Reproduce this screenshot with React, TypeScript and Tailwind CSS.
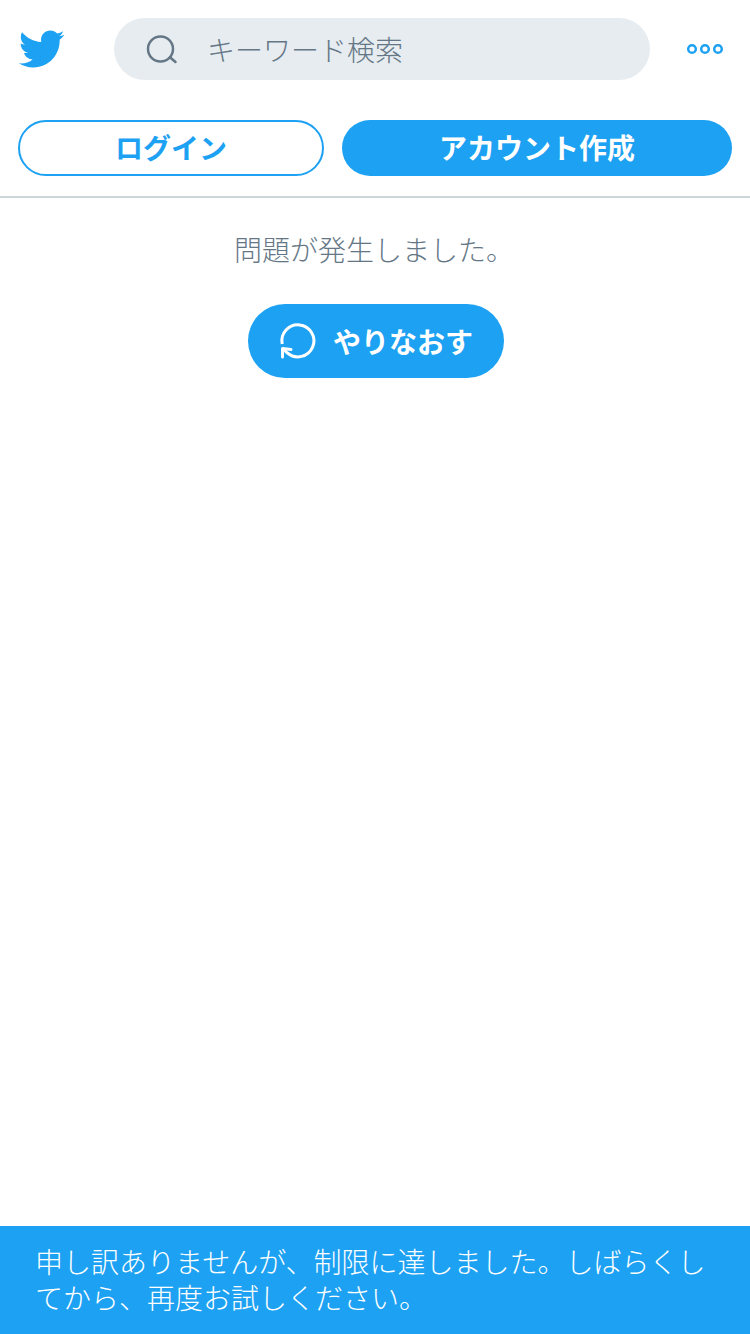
const birdPath =
  "M23.643 4.937c-.835.37-1.732.62-2.675.75.962-.576 1.7-1.49 2.048-2.578-.9.534-1.897.922-2.958 1.13-.85-.904-2.06-1.47-3.4-1.47-2.572 0-4.658 2.086-4.658 4.66 0 .364.042.718.12 1.06-3.873-.195-7.304-2.05-9.602-4.868-.4.69-.63 1.49-.63 2.342 0 1.616.823 3.043 2.072 3.878-.764-.025-1.482-.234-2.11-.583v.06c0 2.257 1.605 4.14 3.737 4.568-.392.106-.803.162-1.227.162-.3 0-.593-.028-.877-.082.593 1.85 2.313 3.198 4.352 3.234-1.595 1.25-3.604 1.995-5.786 1.995-.376 0-.747-.022-1.112-.065 2.062 1.323 4.51 2.093 7.14 2.093 8.57 0 13.255-7.098 13.255-13.254 0-.2-.005-.402-.014-.602.91-.658 1.7-1.477 2.323-2.41z";

const App = () => {
  return (
    <div className="flex h-[1334px] w-[750px] flex-col bg-white font-['Noto_Sans_CJK_JP',sans-serif] text-[28px]">
      <header className="flex h-[98px] items-start pt-[18px]">
        <svg viewBox="0 0 24 24" className="ml-[17px] mt-[7px] h-[48px] w-[48px] fill-[#1da1f2]">
          <path d={birdPath} />
        </svg>
        <div className="ml-[49px] flex h-[62px] w-[536px] items-center rounded-full bg-[#e6ecf0] pl-[30px] text-[#657786]">
          <svg viewBox="0 0 36 36" className="h-[36px] w-[36px] fill-none stroke-[#657786] stroke-[2.5]">
            <circle cx="16.5" cy="18" r="12.5" />
            <path d="M25.9 26.2l5.6 4.8" strokeLinecap="round" />
          </svg>
          <span className="ml-[27px] font-light">キーワード検索</span>
        </div>
        <svg viewBox="0 0 40 12" className="ml-[35px] mt-[25px] h-[12px] w-[40px] fill-none stroke-[#1da1f2] stroke-[2.5]">
          <circle cx="7" cy="6" r="3.8" />
          <circle cx="20" cy="6" r="3.8" />
          <circle cx="33" cy="6" r="3.8" />
        </svg>
      </header>

      <div className="flex h-[100px] items-start border-b-2 border-[#ccd6d9] pl-[18px] pt-[22px]">
        <button className="flex h-[56px] w-[306px] items-center justify-center rounded-full border-2 border-[#1da1f2] pb-[2px] font-semibold text-[#1da1f2]">
          ログイン
        </button>
        <button className="ml-[18px] flex h-[56px] w-[390px] items-center justify-center rounded-full bg-[#1da1f2] pb-[2px] font-semibold text-white">
          アカウント作成
        </button>
      </div>

      <main className="flex flex-1 flex-col items-center">
        <p className="mt-[31px] pr-[2px] font-light leading-[40px] text-[#657786]">問題が発生しました。</p>
        <button className="ml-[2px] mt-[35px] flex h-[74px] w-[256px] items-center rounded-full bg-[#1da1f2] pl-[25px] font-semibold text-white">
          <svg viewBox="0 0 50 50" className="h-[50px] w-[50px] fill-none stroke-white stroke-[3]">
            <path d="M9.2 28A16 16 0 1 1 14.5 37L9.5 32.5" />
            <path d="M9.5 41V32.5L18 33.5" strokeLinecap="round" strokeLinejoin="round" />
          </svg>
          <span className="ml-[10px]">やりなおす</span>
        </button>
      </main>

      <footer className="h-[108px] bg-[#1da1f2] px-[35px] pt-[17px] font-light leading-[36px] text-white">
        申し訳ありませんが、制限に達しました。しばらくしてから、再度お試しください。
      </footer>
    </div>
  );
};

export default App;
